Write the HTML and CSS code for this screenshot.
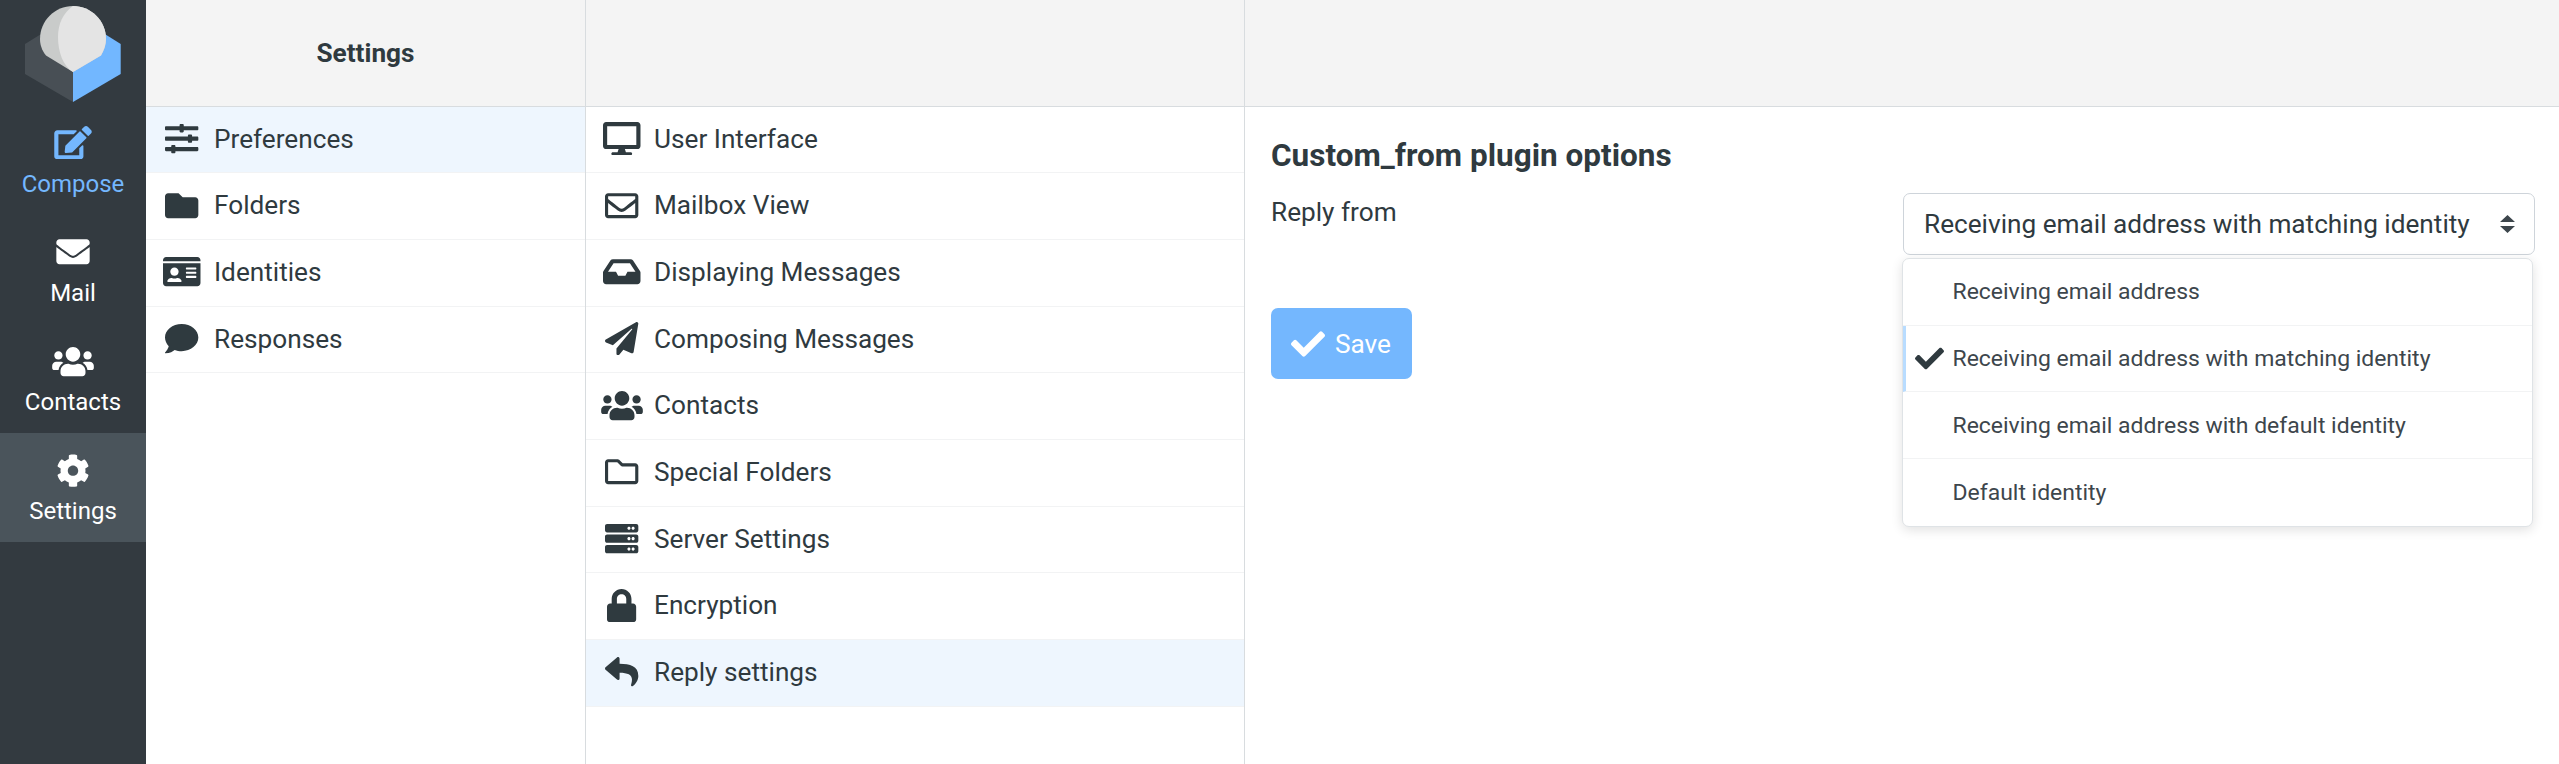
FILE: index.html
```html
<!DOCTYPE html>
<html lang="en">
<head>
  <meta charset="UTF-8">
  <title>Settings</title>
  <link rel="stylesheet" href="styles.css">
</head>
<body>
  <svg class="defs" xmlns="http://www.w3.org/2000/svg">
    <symbol id="i-users" viewBox="0 0 640 512"><path d="M96 224c35.3 0 64-28.7 64-64s-28.7-64-64-64-64 28.7-64 64 28.7 64 64 64zm448 0c35.3 0 64-28.7 64-64s-28.7-64-64-64-64 28.7-64 64 28.7 64 64 64zm32 32h-64c-17.6 0-33.5 7.1-45.1 18.6 40.3 22.1 68.9 62 75.1 109.4h66c17.7 0 32-14.3 32-32v-32c0-35.3-28.7-64-64-64zm-256 0c61.9 0 112-50.1 112-112S381.9 32 320 32 208 82.1 208 144s50.1 112 112 112zm76.8 32h-8.3c-20.8 10-43.9 16-68.5 16s-47.6-6-68.5-16h-8.3C179.6 288 128 339.6 128 403.2V432c0 26.5 21.5 48 48 48h288c26.5 0 48-21.5 48-48v-28.8c0-63.6-51.6-115.2-115.2-115.2zm-223.7-13.4C161.5 263.1 145.6 256 128 256H64c-35.3 0-64 28.7-64 64v32c0 17.7 14.3 32 32 32h65.9c6.3-47.4 34.9-87.3 75.2-109.4z"/></symbol>
    <symbol id="i-check" viewBox="0 0 512 512"><path d="M173.898 439.404l-166.4-166.4c-9.997-9.997-9.997-26.206 0-36.204l36.203-36.204c9.997-9.998 26.207-9.998 36.204 0L192 312.69 432.095 72.596c9.997-9.997 26.207-9.997 36.204 0l36.203 36.204c9.997 9.997 9.997 26.206 0 36.204l-294.4 294.401c-9.998 9.997-26.207 9.997-36.204-.001z"/></symbol>
  </svg>

  <nav class="menu">
    <svg class="logo" viewBox="0 0 146 105" xmlns="http://www.w3.org/2000/svg">
      <path fill="#484f55" d="M25 44 L46 31 L73 72 L73 102 L25 74 Z"/>
      <path fill="#72b7ff" d="M73 72 L73 102 L120.7 74 L120.7 44 L100 31 Z"/>
      <path fill="#c9cbca" d="M73 6 C54.8 6 40 20.8 40 39 C40 44 41.500 50 46 55.500 L73 72 L101 55.500 C104 50 106 45 106 39 C106 20.800 91.200 6 73 6 Z"/>
      <path fill="#e4e4e4" d="M73 6 C91.200 6 106 20.800 106 39 C106 45 104 50 101 55.500 L73 72 C63 66 58 52 58 37 C58 24 63 13 73 6 Z"/>
    </svg>
    <a class="menu-item compose">
      <svg class="icon" viewBox="0 0 576 512"><path d="M402.6 83.2l90.2 90.2c3.8 3.8 3.8 10 0 13.8L274.4 405.6l-92.8 10.3c-12.4 1.4-22.9-9.1-21.5-21.5l10.3-92.8L388.8 83.2c3.8-3.8 10-3.8 13.8 0zm162-22.9l-48.8-48.8c-15.2-15.2-39.9-15.2-55.2 0l-35.4 35.4c-3.8 3.8-3.8 10 0 13.8l90.2 90.2c3.8 3.8 10 3.8 13.8 0l35.4-35.4c15.2-15.3 15.2-40 0-55.2zM384 346.2V448H64V128h229.8c3.2 0 6.2-1.3 8.5-3.5l40-40c7.6-7.6 2.2-20.5-8.5-20.5H48C21.5 64 0 85.5 0 112v352c0 26.5 21.5 48 48 48h352c26.5 0 48-21.5 48-48V306.2c0-10.7-12.9-16-20.5-8.5l-40 40c-2.2 2.3-3.500 5.300-3.500 8.500z"/></svg>
      <span>Compose</span>
    </a>
    <a class="menu-item">
      <svg class="icon" viewBox="0 0 512 512"><path d="M502.3 190.8c3.9-3.1 9.7-.2 9.7 4.7V400c0 26.5-21.5 48-48 48H48c-26.5 0-48-21.5-48-48V195.6c0-5 5.7-7.8 9.7-4.7 22.4 17.4 52.1 39.5 154.1 113.6 21.1 15.4 56.7 47.8 92.2 47.6 35.7.3 72-32.8 92.3-47.6 102-74.1 131.6-96.3 154-113.7zM256 320c23.2.4 56.6-29.2 73.4-41.4 132.7-96.3 142.8-104.7 173.4-128.7 5.8-4.5 9.2-11.5 9.2-18.9v-19c0-26.5-21.5-48-48-48H48C21.5 64 0 85.5 0 112v19c0 7.4 3.4 14.3 9.2 18.9 30.6 23.9 40.7 32.4 173.4 128.7 16.8 12.2 50.2 41.8 73.4 41.4z"/></svg>
      <span>Mail</span>
    </a>
    <a class="menu-item">
      <svg class="icon"><use href="#i-users"/></svg>
      <span>Contacts</span>
    </a>
    <a class="menu-item selected">
      <svg class="icon" viewBox="0 0 512 512"><path d="M487.4 315.7l-42.6-24.6c4.3-23.2 4.3-47 0-70.2l42.6-24.6c4.9-2.8 7.1-8.6 5.5-14-11.1-35.6-30-67.8-54.7-94.6-3.8-4.1-10-5.1-14.8-2.3L380.8 110c-17.9-15.4-38.5-27.3-60.8-35.1V25.8c0-5.6-3.9-10.5-9.4-11.7-36.7-8.2-74.3-7.8-109.2 0-5.5 1.2-9.4 6.1-9.4 11.7V75c-22.2 7.9-42.8 19.8-60.8 35.1L88.7 85.5c-4.9-2.8-11-1.9-14.8 2.3-24.7 26.7-43.6 58.9-54.7 94.6-1.7 5.4.6 11.2 5.5 14L67.3 221c-4.3 23.2-4.3 47 0 70.2l-42.6 24.6c-4.9 2.8-7.1 8.6-5.5 14 11.1 35.6 30 67.8 54.7 94.6 3.8 4.1 10 5.1 14.8 2.3l42.6-24.6c17.9 15.4 38.5 27.3 60.8 35.1v49.2c0 5.6 3.9 10.5 9.4 11.7 36.7 8.2 74.3 7.8 109.2 0 5.5-1.2 9.4-6.1 9.4-11.7v-49.2c22.2-7.9 42.8-19.8 60.8-35.1l42.6 24.6c4.9 2.8 11 1.9 14.8-2.3 24.7-26.7 43.6-58.9 54.7-94.6 1.5-5.5-.7-11.3-5.6-14.1zM256 336c-44.1 0-80-35.9-80-80s35.9-80 80-80 80 35.9 80 80-35.9 80-80 80z"/></svg>
      <span>Settings</span>
    </a>
  </nav>

  <section class="col col-sections">
    <div class="col-header">Settings</div>
    <ul class="list">
      <li class="selected">
        <span class="list-icon"><svg class="icon" viewBox="0 0 512 512"><path d="M496 384H160v-16c0-8.800-7.200-16-16-16h-32c-8.800 0-16 7.200-16 16v16H16c-8.800 0-16 7.200-16 16v32c0 8.800 7.200 16 16 16h80v16c0 8.800 7.200 16 16 16h32c8.800 0 16-7.200 16-16v-16h336c8.800 0 16-7.200 16-16v-32c0-8.800-7.200-16-16-16zm0-160h-80v-16c0-8.800-7.200-16-16-16h-32c-8.800 0-16 7.200-16 16v16H16c-8.800 0-16 7.200-16 16v32c0 8.800 7.200 16 16 16h336v16c0 8.800 7.200 16 16 16h32c8.800 0 16-7.200 16-16v-16h80c8.800 0 16-7.200 16-16v-32c0-8.800-7.200-16-16-16zm0-160H288V48c0-8.800-7.200-16-16-16h-32c-8.800 0-16 7.200-16 16v16H16C7.200 64 0 71.200 0 80v32c0 8.800 7.200 16 16 16h208v16c0 8.800 7.200 16 16 16h32c8.800 0 16-7.200 16-16v-16h208c8.800 0 16-7.200 16-16V80c0-8.800-7.200-16-16-16z"/></svg></span>
        Preferences
      </li>
      <li>
        <span class="list-icon"><svg class="icon" viewBox="0 0 512 512"><path d="M464 128H272l-64-64H48C21.490 64 0 85.490 0 112v288c0 26.510 21.490 48 48 48h416c26.510 0 48-21.490 48-48V176c0-26.510-21.490-48-48-48z"/></svg></span>
        Folders
      </li>
      <li>
        <span class="list-icon"><svg class="icon" viewBox="0 0 576 512"><path d="M528 32H48C21.500 32 0 53.500 0 80v16h576V80c0-26.500-21.500-48-48-48zM0 432c0 26.500 21.500 48 48 48h480c26.500 0 48-21.500 48-48V128H0v304zm352-232c0-4.400 3.600-8 8-8h144c4.400 0 8 3.600 8 8v16c0 4.400-3.600 8-8 8H360c-4.400 0-8-3.600-8-8v-16zm0 64c0-4.400 3.600-8 8-8h144c4.400 0 8 3.600 8 8v16c0 4.400-3.600 8-8 8H360c-4.400 0-8-3.600-8-8v-16zm0 64c0-4.400 3.600-8 8-8h144c4.400 0 8 3.600 8 8v16c0 4.400-3.600 8-8 8H360c-4.400 0-8-3.600-8-8v-16zM176 192c35.300 0 64 28.700 64 64s-28.700 64-64 64-64-28.700-64-64 28.700-64 64-64zM67.100 396.200C75.500 370.500 99.600 352 128 352h8.200c12.300 5.100 25.700 8 39.800 8s27.600-2.900 39.800-8h8.200c28.400 0 52.500 18.500 60.900 44.200 3.200 9.900-5.200 19.800-15.600 19.800H82.700c-10.400 0-18.800-10-15.600-19.800z"/></svg></span>
        Identities
      </li>
      <li>
        <span class="list-icon"><svg class="icon" viewBox="0 0 512 512"><path d="M256 32C114.600 32 0 125.100 0 240c0 49.600 21.400 95 57 130.700C44.500 421.100 2.700 466 2.200 466.500c-2.200 2.300-2.800 5.700-1.500 8.700S4.800 480 8 480c66.300 0 116-31.800 140.600-51.400 32.700 12.300 69 19.400 107.400 19.400 141.400 0 256-93.100 256-208S397.400 32 256 32z"/></svg></span>
        Responses
      </li>
    </ul>
  </section>

  <section class="col col-options">
    <div class="col-header"></div>
    <ul class="list">
      <li>
        <span class="list-icon"><svg class="icon" viewBox="0 0 576 512"><path d="M528 0H48C21.500 0 0 21.500 0 48v320c0 26.500 21.500 48 48 48h192l-16 48h-72c-13.300 0-24 10.700-24 24s10.700 24 24 24h272c13.300 0 24-10.700 24-24s-10.700-24-24-24h-72l-16-48h192c26.500 0 48-21.500 48-48V48c0-26.500-21.500-48-48-48zm-16 352H64V64h448v288z"/></svg></span>
        User Interface
      </li>
      <li>
        <span class="list-icon"><svg class="icon" viewBox="0 0 512 512"><path d="M464 64H48C21.490 64 0 85.490 0 112v288c0 26.510 21.490 48 48 48h416c26.510 0 48-21.490 48-48V112c0-26.510-21.490-48-48-48zm0 48v40.805c-22.422 18.259-58.168 46.651-134.587 106.490-16.841 13.247-50.201 45.072-73.413 44.701-23.208.375-56.579-31.459-73.413-44.701C106.180 199.465 70.425 171.067 48 152.805V112h416zM48 400V214.398c22.914 18.251 55.409 43.862 104.938 82.646 21.857 17.205 60.134 55.186 103.062 54.955 42.717.231 80.509-37.199 103.053-54.947 49.528-38.783 82.032-64.401 104.947-82.653V400H48z"/></svg></span>
        Mailbox View
      </li>
      <li>
        <span class="list-icon"><svg class="icon" viewBox="0 0 576 512"><path d="M567.938 243.908L462.250 85.374A48.003 48.003 0 0 0 422.311 64H153.689a48 48 0 0 0-39.938 21.374L8.062 243.908A47.994 47.994 0 0 0 0 270.533V400c0 26.510 21.490 48 48 48h480c26.510 0 48-21.490 48-48V270.533a47.994 47.994 0 0 0-8.062-26.625zM162.252 128h251.497l85.333 128H376l-32 64H232l-32-64H76.918l85.334-128z"/></svg></span>
        Displaying Messages
      </li>
      <li>
        <span class="list-icon"><svg class="icon" viewBox="0 0 512 512"><path d="M476 3.200L12.500 270.600c-18.100 10.400-15.800 35.600 2.200 43.200L121 358.400l287.300-253.200c5.500-4.900 13.300 2.600 8.600 8.300L176 407v80.500c0 23.600 28.500 32.900 42.500 15.800L282 426l124.600 52.200c14.200 6 30.400-2.900 33-18.200l72-432C515 7.800 493.300-6.800 476 3.200z"/></svg></span>
        Composing Messages
      </li>
      <li>
        <span class="list-icon"><svg class="icon"><use href="#i-users"/></svg></span>
        Contacts
      </li>
      <li>
        <span class="list-icon"><svg class="icon" viewBox="0 0 512 512"><path d="M464 128H272l-54.630-54.630c-6-6-14.140-9.370-22.630-9.370H48C21.490 64 0 85.490 0 112v288c0 26.510 21.490 48 48 48h416c26.510 0 48-21.490 48-48V176c0-26.510-21.490-48-48-48zm0 272H48V112h140.120l54.630 54.630c6 6 14.140 9.370 22.630 9.370H464v224z"/></svg></span>
        Special Folders
      </li>
      <li>
        <span class="list-icon"><svg class="icon" viewBox="0 0 512 512"><path d="M480 160H32c-17.673 0-32-14.327-32-32V64c0-17.673 14.327-32 32-32h448c17.673 0 32 14.327 32 32v64c0 17.673-14.327 32-32 32zm-48-88c-13.255 0-24 10.745-24 24s10.745 24 24 24 24-10.745 24-24-10.745-24-24-24zm-64 0c-13.255 0-24 10.745-24 24s10.745 24 24 24 24-10.745 24-24-10.745-24-24-24zm112 248H32c-17.673 0-32-14.327-32-32v-64c0-17.673 14.327-32 32-32h448c17.673 0 32 14.327 32 32v64c0 17.673-14.327 32-32 32zm-48-88c-13.255 0-24 10.745-24 24s10.745 24 24 24 24-10.745 24-24-10.745-24-24-24zm-64 0c-13.255 0-24 10.745-24 24s10.745 24 24 24 24-10.745 24-24-10.745-24-24-24zm112 248H32c-17.673 0-32-14.327-32-32v-64c0-17.673 14.327-32 32-32h448c17.673 0 32 14.327 32 32v64c0 17.673-14.327 32-32 32zm-48-88c-13.255 0-24 10.745-24 24s10.745 24 24 24 24-10.745 24-24-10.745-24-24-24zm-64 0c-13.255 0-24 10.745-24 24s10.745 24 24 24 24-10.745 24-24-10.745-24-24-24z"/></svg></span>
        Server Settings
      </li>
      <li>
        <span class="list-icon"><svg class="icon" viewBox="0 0 448 512"><path d="M400 224h-24v-72C376 68.200 307.800 0 224 0S72 68.200 72 152v72H48c-26.500 0-48 21.500-48 48v192c0 26.500 21.500 48 48 48h352c26.500 0 48-21.500 48-48V272c0-26.500-21.500-48-48-48zm-104 0H152v-72c0-39.700 32.300-72 72-72s72 32.300 72 72v72z"/></svg></span>
        Encryption
      </li>
      <li class="selected">
        <span class="list-icon"><svg class="icon" viewBox="0 0 512 512"><path d="M8.309 189.836L184.313 37.851C199.719 24.546 224 35.347 224 56.015v80.053c160.629 1.839 288 34.032 288 186.258 0 61.441-39.581 122.309-83.333 154.132-13.653 9.931-33.111-2.533-28.077-18.631 45.344-145.012-21.507-183.510-176.590-185.742V360c0 20.700-24.300 31.453-39.687 18.164l-176.004-152c-11.071-9.562-11.086-26.753 0-36.328z"/></svg></span>
        Reply settings
      </li>
    </ul>
  </section>

  <div class="pane">
    <div class="col-header"></div>
    <main class="content">
      <h2>Custom_from plugin options</h2>
      <div class="form-row">
        <label>Reply from</label>
        <div class="select-wrap">
          <div class="select">
            Receiving email address with matching identity
            <svg class="updown" viewBox="0 0 15 18"><path d="M7.500 0 L15 7 L0 7 Z M0 11 L15 11 L7.500 18 Z"/></svg>
          </div>
          <ul class="popup">
            <li>Receiving email address</li>
            <li class="active"><svg class="popup-check"><use href="#i-check"/></svg>Receiving email address with matching identity</li>
            <li>Receiving email address with default identity</li>
            <li>Default identity</li>
          </ul>
        </div>
      </div>
      <button class="save"><svg class="icon"><use href="#i-check"/></svg>Save</button>
    </main>
  </div>
</body>
</html>
```

FILE: styles.css
```css
* {
  box-sizing: border-box;
}
html, body {
  height: 100%;
}
body {
  margin: 0;
  display: flex;
  overflow: hidden;
  font-family: Roboto, "Liberation Sans", sans-serif;
  font-size: 26.2px;
  color: #2f3a3f;
  background-color: #fff;
}
.defs {
  display: none;
}
.icon {
  height: 33.33px;
  width: auto;
  fill: currentColor;
  display: block;
}

/* left menu */
.menu {
  width: 146px;
  flex: none;
  background-color: #333a40;
  color: #fff;
}
.logo {
  display: block;
  width: 146px;
  height: 105px;
}
.menu-item {
  height: 109.3px;
  padding-top: 21px;
  display: flex;
  flex-direction: column;
  align-items: center;
  font-size: 24px;
  line-height: 32px;
}
.menu-item .icon {
  width: 44px;
  margin-bottom: 8px;
}
.menu-item.compose .icon {
  margin-bottom: 9px;
}
.menu-item.compose {
  color: #74b7fe;
}
.menu-item.selected {
  background-color: #4a545b;
}

/* settings columns */
.col {
  flex: none;
  border-right: 1px solid #d8dcdf;
}
.col-sections {
  width: 440px;
}
.col-options {
  width: 659px;
}
.col-header {
  height: 106.67px;
  background-color: #f4f4f4;
  border-bottom: 1px solid #d8dcdf;
  display: flex;
  align-items: center;
  justify-content: center;
  font-weight: 700;
}
.list {
  list-style: none;
  margin: 0;
  padding: 0;
}
.list li {
  height: 66.67px;
  padding-bottom: 1.5px;
  display: flex;
  align-items: center;
  border-bottom: 1px solid #f2f3f4;
}
.list li.selected {
  background-color: #eef6fe;
}
.list-icon {
  width: 68px;
  padding-left: 4px;
  flex: none;
  display: flex;
  justify-content: center;
}

/* right content */
.pane {
  flex: 1;
}
.content {
  padding: 29px 24px 0 26px;
}
.content h2 {
  margin: 0;
  font-size: 31.5px;
  line-height: 40px;
  font-weight: 700;
}
.form-row {
  display: flex;
  justify-content: space-between;
  align-items: flex-start;
  margin-top: 11px;
}
.form-row label {
  margin-top: 5px;
  line-height: 40px;
}
.select-wrap {
  position: relative;
  width: 632px;
  margin-top: 6.5px;
}
.select {
  height: 62px;
  padding: 0 19.5px 0 20px;
  display: flex;
  align-items: center;
  justify-content: space-between;
  border: 1px solid #ced4da;
  border-radius: 7px;
}
.updown {
  width: 15px;
  height: 18px;
  fill: #3d464c;
}
.popup {
  position: absolute;
  top: 65px;
  left: -1px;
  width: 631px;
  height: 268.67px;
  list-style: none;
  margin: 0;
  padding: 0;
  background-color: #fff;
  border: 1px solid #dfe3e6;
  border-radius: 7px;
  box-shadow: 0 3px 12px rgba(0, 0, 0, 0.12);
  font-size: 22.95px;
  color: #3d464c;
}
.popup li {
  height: 66.67px;
  padding-left: 49.5px;
  display: flex;
  align-items: center;
  position: relative;
  border-bottom: 1px solid #f2f3f4;
}
.popup li:last-child {
  border-bottom: 0;
}
.popup li.active {
  border-left: 3px solid #b8dcff;
  padding-left: 46.5px;
}
.popup-check {
  position: absolute;
  left: 8.6px;
  top: 18.5px;
  width: 29px;
  height: 29px;
  fill: #2f3a3f;
}
.save {
  display: flex;
  align-items: center;
  gap: 10px;
  width: 141px;
  height: 71px;
  margin-top: 53px;
  padding: 0 0 0 20px;
  border: none;
  border-radius: 7px;
  background-color: #74b7fe;
  color: #fff;
  font-family: inherit;
  font-size: 26.2px;
}
.save .icon {
  width: 34px;
  height: 34px;
}
```
